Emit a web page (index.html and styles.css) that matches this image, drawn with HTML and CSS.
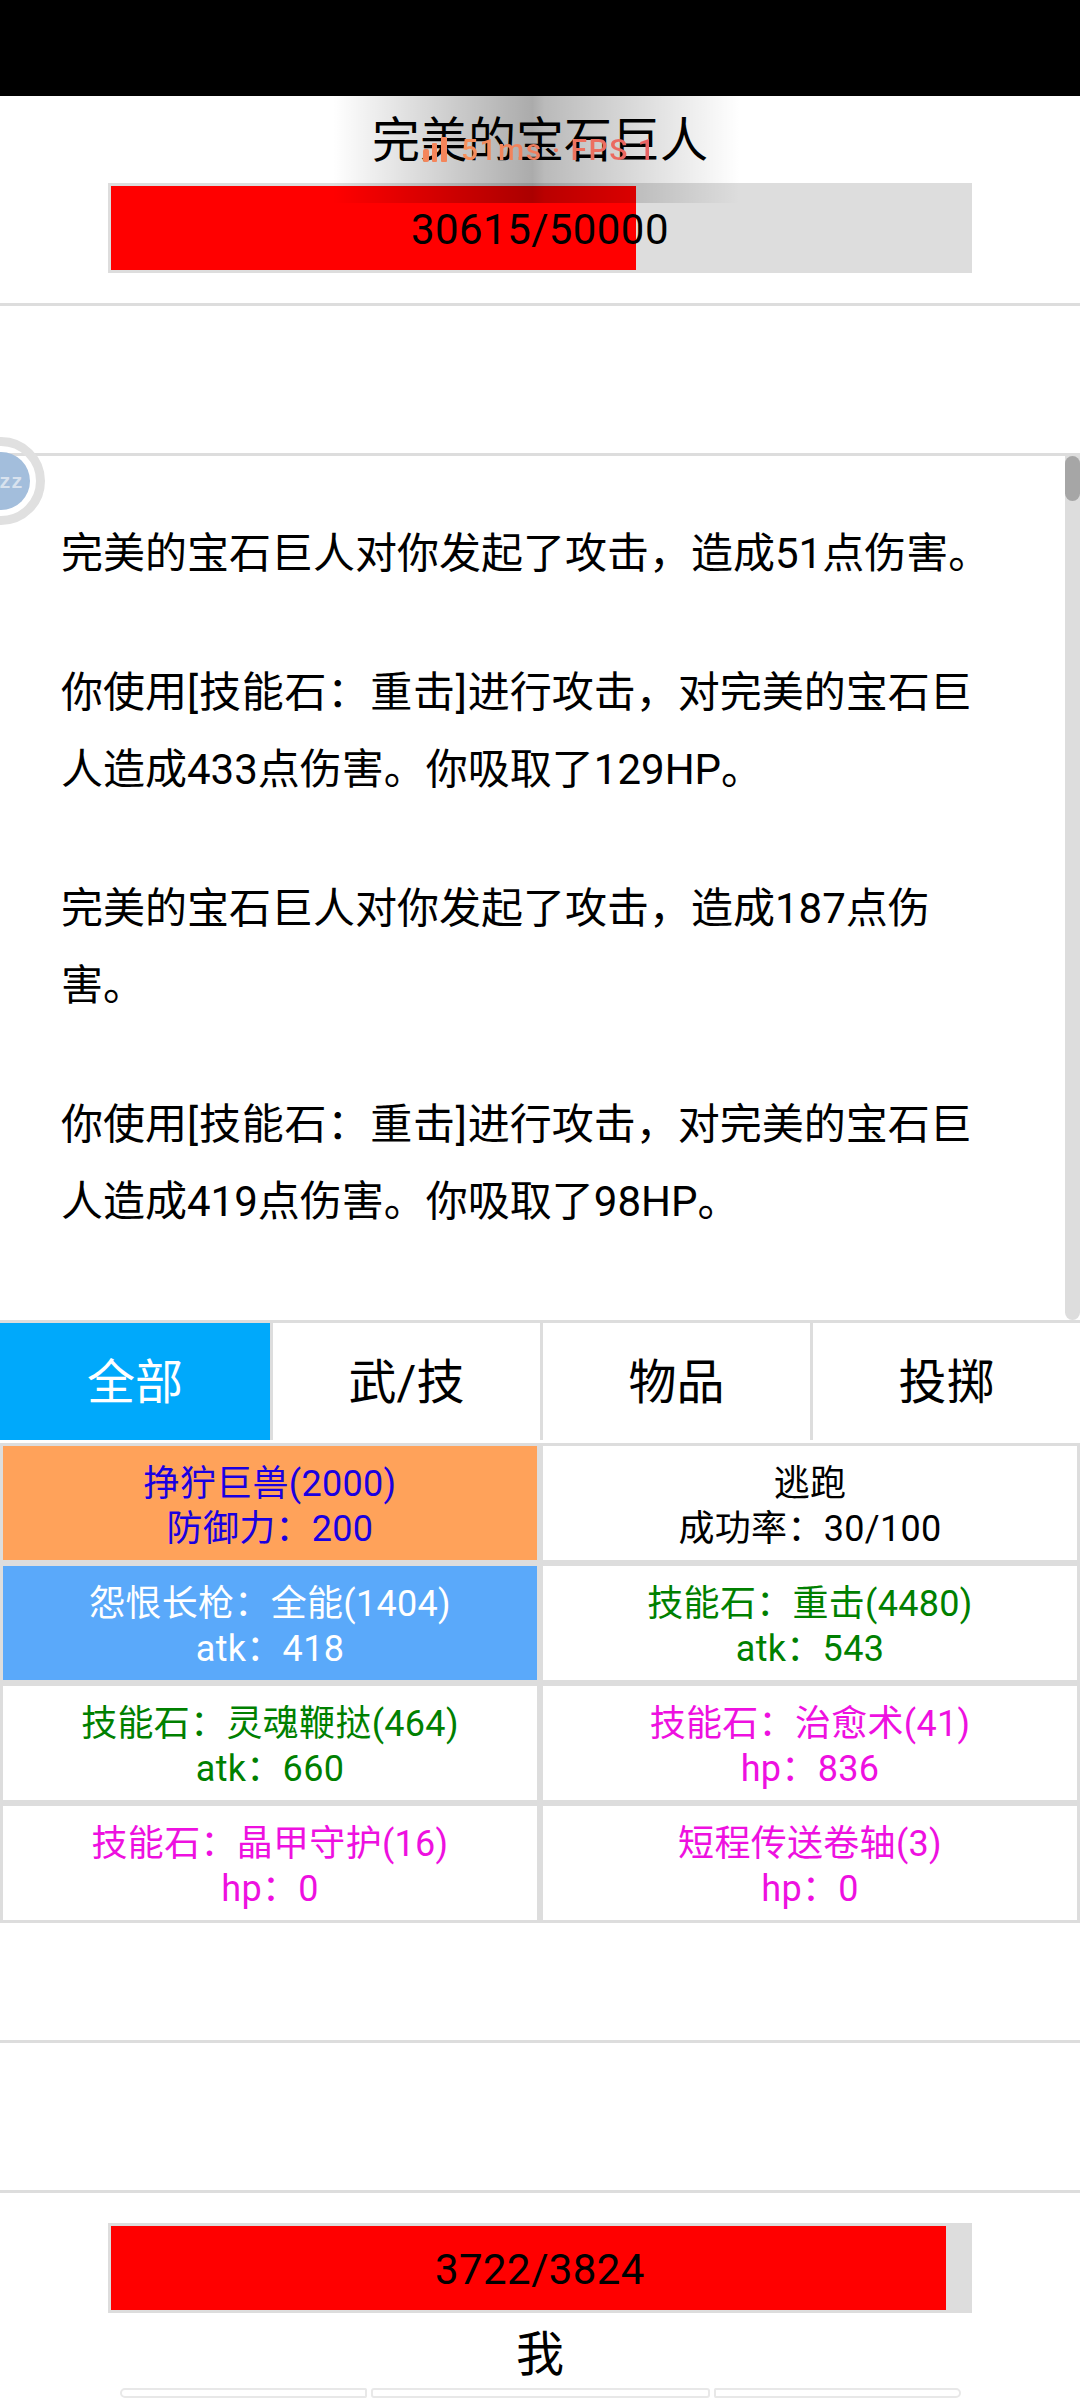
FILE: index.html
```html
<!DOCTYPE html>
<html>
    <head>
        <meta charset="utf-8">
        <title>battle</title>
        <link rel="stylesheet" href="styles.css">
    </head>
    <body>
        <div id="statusBar"></div>

        <!-- enemy -->
        <div class="fighter" id="enemy">
            <div class="fighterName">完美的宝石巨人</div>
            <div class="hpBar">
                <div class="hpFill" style="width:61.23%"></div>
                <div class="hpText">30615/50000</div>
            </div>
        </div>

        <div class="spacer"></div>

        <!-- battle log -->
        <div id="log">
            <p>完美的宝石巨人对你发起了攻击，造成51点伤害。</p>
            <p>你使用<span class="skillName">[技能石：重击]</span>进行攻击，对完美的宝石巨人造成433点伤害。你吸取了129HP。</p>
            <p>完美的宝石巨人对你发起了攻击，造成187点伤害。</p>
            <p>你使用<span class="skillName">[技能石：重击]</span>进行攻击，对完美的宝石巨人造成419点伤害。你吸取了98HP。</p>
            <div id="scrollTrack"><div id="scrollThumb"></div></div>
        </div>

        <!-- tabs -->
        <div id="tabs">
            <div class="tab active">全部</div>
            <div class="tab">武/技</div>
            <div class="tab">物品</div>
            <div class="tab">投掷</div>
        </div>

        <!-- skills and items -->
        <div id="actions">
            <div class="action orange">挣狞巨兽(2000)<br>防御力：200</div>
            <div class="action">逃跑<br>成功率：30/100</div>
            <div class="action blue">怨恨长枪：全能(1404)<br>atk：418</div>
            <div class="action green">技能石：重击(4480)<br>atk：543</div>
            <div class="action green">技能石：灵魂鞭挞(464)<br>atk：660</div>
            <div class="action pink">技能石：治愈术(41)<br>hp：836</div>
            <div class="action pink">技能石：晶甲守护(16)<br>hp：0</div>
            <div class="action pink">短程传送卷轴(3)<br>hp：0</div>
        </div>

        <div class="spacer short"></div>
        <div class="spacer"></div>

        <!-- player -->
        <div class="fighter" id="player">
            <div class="hpBar">
                <div class="hpFill" style="width:97.33%"></div>
                <div class="hpText">3722/3824</div>
            </div>
            <div class="fighterName">我</div>
            <div id="bottomBtns">
                <div class="bottomBtn"></div>
                <div class="bottomBtn"></div>
                <div class="bottomBtn"></div>
            </div>
        </div>

        <!-- things floating over the page -->
        <div id="perfShade"></div>
        <div id="perfText">
            <svg width="24" height="25" viewBox="0 0 24 25"><rect x="0" y="12" width="6" height="13" rx="2" fill="#f4855a"/><rect x="9" y="6" width="5" height="19" rx="1" fill="#f4855a"/><rect x="18" y="0" width="6" height="25" rx="1" fill="#f4855a"/></svg>
            <span id="perfNums">51ms · FPS 1</span>
        </div>
        <div id="floatBall">
            <svg width="46" height="88" viewBox="0 0 46 88">
                <circle cx="1" cy="44" r="39.5" fill="none" stroke="#e0e0e0" stroke-width="9"/>
                <circle cx="1" cy="44" r="29" fill="#a3bedc"/>
                <text x="-1" y="51" class="ballText">zz</text>
            </svg>
        </div>
    </body>
</html>
```

FILE: styles.css
```css
html,body{
    margin:0px;
    padding:0px;
}
body{
    position:relative;
    width:1080px;
    height:2400px;
    overflow:hidden;
    background:white;
    color:black;
    font-family:Roboto,"Noto Sans CJK SC",sans-serif;
}
#statusBar{
    height:96px;
    background:black;
}
.fighterName{
    font-size:48px;
    line-height:48px;
    text-align:center;
}
.hpBar{
    position:relative;
    width:858px;
    height:84px;
    margin:0px auto;
    border:3px solid #dddddd;
    background:#dddddd;
}
.hpFill{
    height:100%;
    background:#ff0000;
}
.hpText{
    position:absolute;
    top:0px;
    left:0px;
    width:100%;
    line-height:87px;
    font-size:42px;
    letter-spacing:0.4px;
    text-align:center;
}
#enemy{
    box-sizing:border-box;
    height:210px;
    border-bottom:3px solid #dddddd;
}
#enemy .fighterName{
    padding:21px 0px 18px;
}
.spacer{
    height:147px;
    border-bottom:3px solid #dddddd;
}
.spacer.short{
    height:117px;
}
#log{
    position:relative;
    height:864px;
    box-sizing:border-box;
    padding:59px 76px 0px 61px;
    overflow:hidden;
}
#log p{
    margin:0px 0px 62px;
    font-size:42px;
    line-height:77px;
}
.skillName{
    letter-spacing:0.8px;
}
#scrollTrack{
    position:absolute;
    top:0px;
    right:0px;
    width:15px;
    height:100%;
    border-radius:0px 0px 8px 8px;
    background:#dddddd;
}
#scrollThumb{
    height:45px;
    border-radius:8px;
    background:#a6a6a6;
}
#tabs{
    display:grid;
    grid-template-columns:repeat(4,270px);
    border-top:3px solid #dddddd;
}
.tab{
    height:117px;
    line-height:119px;
    font-size:48px;
    text-align:center;
    border-left:3px solid #dddddd;
    box-sizing:border-box;
}
.tab:first-child{
    border-left:0px;
}
.tab.active{
    background:#00a9fb;
    color:white;
}
#actions{
    display:grid;
    grid-template-columns:repeat(2,540px);
    padding-top:3px;
}
.action{
    height:120px;
    box-sizing:border-box;
    padding-top:16px;
    border:3px solid #dddddd;
    font-size:36px;
    line-height:45px;
    letter-spacing:0.3px;
    text-align:center;
}
.orange{
    background:#ffa25a;
    color:#1a00e0;
}
.blue{
    background:#5aa9fa;
    color:white;
}
.green{
    color:#008000;
}
.pink{
    color:#ee10e0;
}
#player .hpBar{
    margin-top:30px;
}
#player .fighterName{
    padding:18px 0px 9px;
}
#bottomBtns{
    display:grid;
    grid-template-columns:247px 339px 247px;
    gap:4px;
    width:841px;
    margin:0px auto;
}
.bottomBtn{
    height:10px;
    box-sizing:border-box;
    border:2px solid #e8e8e8;
    border-radius:3px;
}
.bottomBtn:first-child{
    border-radius:6px 2px 2px 6px;
}
.bottomBtn:last-child{
    border-radius:2px 6px 6px 2px;
}
#perfShade{
    position:absolute;
    top:96px;
    left:333px;
    width:407px;
    height:107px;
    background:linear-gradient(to right,rgba(0,0,0,0) 0%,rgba(0,0,0,0.33) 49%,rgba(0,0,0,0.27) 52%,rgba(0,0,0,0) 100%);
}
#perfText{
    position:absolute;
    top:137px;
    left:423px;
    display:flex;
    align-items:flex-end;
    gap:14px;
    height:25px;
}
#perfNums{
    font-family:Roboto,sans-serif;
    font-size:30px;
    font-weight:500;
    line-height:25px;
    letter-spacing:1.5px;
    white-space:nowrap;
    background:linear-gradient(to right,#f5905a,#e85f62);
    -webkit-background-clip:text;
    background-clip:text;
    color:transparent;
}
#floatBall{
    position:absolute;
    top:437px;
    left:0px;
    width:46px;
    height:88px;
}
.ballText{
    font-family:"Liberation Mono",monospace;
    font-size:20px;
    font-weight:bold;
    fill:#d8e2ee;
}
```
